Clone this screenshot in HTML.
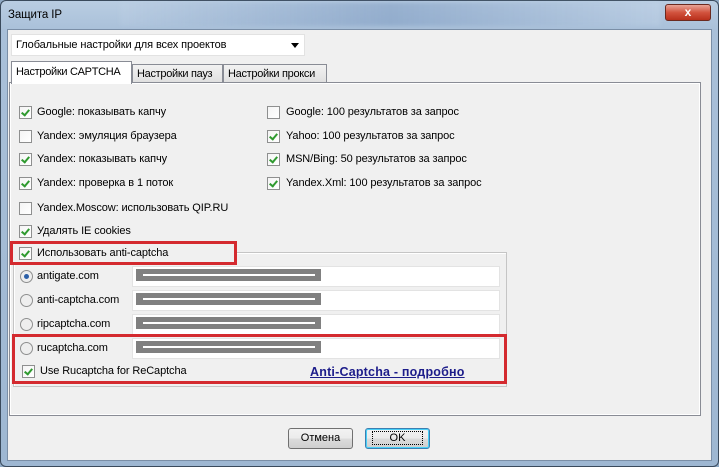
<!DOCTYPE html>
<html><head><meta charset="utf-8"><style>
*{box-sizing:border-box;margin:0;padding:0}
body{width:719px;height:467px;overflow:hidden;background:#8fa9c4;font-family:"Liberation Sans","DejaVu Sans",sans-serif;font-size:11px;color:#000;position:relative}
.a{position:absolute}
.frame{left:0;top:0;width:719px;height:467px;background:linear-gradient(180deg,#b9cde2 0,#a9c0d9 30px,#9eb7d2 100%);border:1px solid #3a4a5c;border-radius:6px}
.client{left:7px;top:29px;width:705px;height:432px;background:#f0f0f0;border:1px solid #7a8ea6}
.cb{width:13px;height:13px;border:1px solid #8e8f8f;background:linear-gradient(135deg,#f4f4f4,#fff)}
.cb.c::after{content:"";position:absolute;left:3px;top:1px;width:3px;height:6px;border:solid #2f9a2f;border-width:0 2px 2px 0;transform:rotate(40deg)}
.rd{width:13px;height:13px;border:1px solid #8e8f8f;border-radius:50%;background:#eee}
.rd.c::after{content:"";position:absolute;left:3px;top:3px;width:5px;height:5px;border-radius:50%;background:#2b5fa8}
.t{white-space:nowrap;font-size:11px;line-height:13px;letter-spacing:-0.1px}
.inp{background:#fff;border:1px solid #e3e3e3;height:21px;width:368px;left:132px}
.bar{left:3px;top:2px;width:185px;height:12px;background:#808080}
.bar::after{content:"";position:absolute;left:7px;top:5px;width:172px;height:2px;background:#fff}
.red{border:3px solid #d42a2f}
.btn{height:21px;border:1px solid #707070;border-radius:3px;background:linear-gradient(#f2f2f2,#ebebeb 50%,#dcdcdc 51%,#cfcfcf);text-align:center;line-height:19px;font-size:11px}
</style></head><body>
<div class="a frame"></div>
<div class="a" style="left:120px;top:2px;width:540px;height:24px;background:linear-gradient(90deg,rgba(200,215,235,.2),rgba(120,150,190,.5),rgba(200,215,235,.3));filter:blur(2px)"></div>
<div class="a t" style="left:8px;top:9px;font-size:11.5px">Защита IP</div>
<div class="a" style="left:665px;top:4px;width:46px;height:17px;border:1px solid #6b2a20;border-radius:3px;background:linear-gradient(#e8a497,#d2533e 50%,#b8301c);color:#fff;font-weight:bold;text-align:center;line-height:15px;font-size:12px">x</div>
<div class="a client"></div>
<div class="a" style="left:11px;top:34px;width:294px;height:22px;background:#fff;border:1px solid #e2e2e2"></div>
<div class="a t" style="left:16px;top:39px">Глобальные настройки для всех проектов</div>
<div class="a" style="left:291px;top:43px;width:0;height:0;border-left:4px solid transparent;border-right:4px solid transparent;border-top:5px solid #000"></div>
<div class="a" style="left:9px;top:82px;width:692px;height:334px;background:#f0f0f0;border:1px solid #898c95"></div>
<div class="a" style="left:10px;top:83px;width:690px;height:332px;border:1px solid #fff"></div>
<div class="a" style="left:132px;top:64px;width:91px;height:19px;border:1px solid #898c95;background:linear-gradient(#f2f2f2,#e0e0e0)"></div>
<div class="a" style="left:223px;top:64px;width:104px;height:19px;border:1px solid #898c95;background:linear-gradient(#f2f2f2,#e0e0e0)"></div>
<div class="a" style="left:11px;top:61px;width:121px;height:23px;border:1px solid #898c95;border-bottom:none;background:#fff"></div>
<div class="a t" style="left:16px;top:66px;letter-spacing:-0.3px">Настройки CAPTCHA</div>
<div class="a t" style="left:137px;top:68px;letter-spacing:-0.3px">Настройки пауз</div>
<div class="a t" style="left:228px;top:68px;letter-spacing:-0.3px">Настройки прокси</div>

<div class="a cb c" style="left:19px;top:106px"></div><div class="a t" style="left:37px;top:106px">Google: показывать капчу</div>
<div class="a cb" style="left:19px;top:130px"></div><div class="a t" style="left:37px;top:130px">Yandex: эмуляция браузера</div>
<div class="a cb c" style="left:19px;top:153px"></div><div class="a t" style="left:37px;top:153px">Yandex: показывать капчу</div>
<div class="a cb c" style="left:19px;top:177px"></div><div class="a t" style="left:37px;top:177px">Yandex: проверка в 1 поток</div>
<div class="a cb" style="left:19px;top:202px"></div><div class="a t" style="left:37px;top:202px">Yandex.Moscow: использовать QIP.RU</div>
<div class="a cb c" style="left:19px;top:225px"></div><div class="a t" style="left:37px;top:225px">Удалять IE cookies</div>

<div class="a cb" style="left:267px;top:106px"></div><div class="a t" style="left:286px;top:106px">Google: 100 результатов за запрос</div>
<div class="a cb c" style="left:267px;top:130px"></div><div class="a t" style="left:286px;top:130px">Yahoo: 100 результатов за запрос</div>
<div class="a cb c" style="left:267px;top:153px"></div><div class="a t" style="left:286px;top:153px">MSN/Bing: 50 результатов за запрос</div>
<div class="a cb c" style="left:267px;top:177px"></div><div class="a t" style="left:286px;top:177px">Yandex.Xml: 100 результатов за запрос</div>

<div class="a" style="left:13px;top:252px;width:494px;height:135px;border:1px solid #c5c5c5;box-shadow:inset 1px 1px 0 #fff"></div>
<div class="a red" style="left:10px;top:241px;width:227px;height:24px;background:#f0f0f0"></div>
<div class="a cb c" style="left:19px;top:247px"></div><div class="a t" style="left:37px;top:247px">Использовать anti-captcha</div>

<div class="a rd c" style="left:20px;top:270px"></div><div class="a t" style="left:37px;top:270px">antigate.com</div>
<div class="a inp" style="top:266px"><div class="a bar"></div></div>
<div class="a rd" style="left:20px;top:294px"></div><div class="a t" style="left:37px;top:294px">anti-captcha.com</div>
<div class="a inp" style="top:290px"><div class="a bar"></div></div>
<div class="a rd" style="left:20px;top:318px"></div><div class="a t" style="left:37px;top:318px">ripcaptcha.com</div>
<div class="a inp" style="top:314px"><div class="a bar"></div></div>
<div class="a red" style="left:12px;top:334px;width:495px;height:50px"></div>
<div class="a rd" style="left:20px;top:342px"></div><div class="a t" style="left:37px;top:342px">rucaptcha.com</div>
<div class="a inp" style="top:338px"><div class="a bar"></div></div>
<div class="a cb c" style="left:22px;top:365px"></div><div class="a t" style="left:40px;top:365px">Use Rucaptcha for ReCaptcha</div>
<div class="a t" style="left:310px;top:366px;font-weight:bold;font-size:12.5px;color:#1c1c8a;text-decoration:underline;letter-spacing:0.2px">Anti-Captcha - подробно</div>

<div class="a btn" style="left:288px;top:428px;width:65px">Отмена</div>
<div class="a btn" style="left:365px;top:428px;width:65px;border-color:#3c7fb1;box-shadow:inset 0 0 0 1px #48d0f8"><span style="border:1px dotted #000;padding:0 17px">OK</span></div>
</body></html>
